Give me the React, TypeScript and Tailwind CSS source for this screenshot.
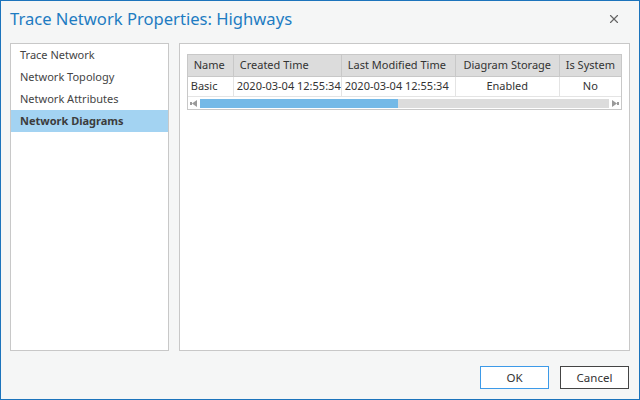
import { X } from "lucide-react";

const font = { fontFamily: '"Segoe UI", "Noto Sans", sans-serif' };

const navItems = ["Trace Network", "Network Topology", "Network Attributes", "Network Diagrams"];

const columns = [
  { label: "Name", w: "w-[46px]", center: false },
  { label: "Created Time", w: "w-[108px]", center: false },
  { label: "Last Modified Time", w: "w-[114px]", center: false },
  { label: "Diagram Storage", w: "w-[104px]", center: true },
  { label: "Is System", w: "flex-1", center: true },
];

const row = ["Basic", "2020-03-04 12:55:34", "2020-03-04 12:55:34", "Enabled", "No"];

export default function App() {
  return (
    <div
      className="w-[640px] h-[400px] bg-[#f5f6f6] border border-[#1c74bc] flex flex-col text-[#333] overflow-hidden"
      style={font}
    >
      {/* Title bar */}
      <div className="h-[42px] flex items-center pl-[9px] pr-[18px]">
        <h1 className="text-[16.6px] text-[#1e7cc2] leading-none -mt-[6px] whitespace-nowrap">
          Trace Network Properties: Highways
        </h1>
        <X className="ml-auto w-[14px] h-[14px] text-[#666] -mt-[6px]" strokeWidth={2} />
      </div>

      <div className="flex gap-[10px] px-[9px] h-[308px]">
        {/* Left nav */}
        <ul className="w-[160px] bg-white border border-[#c8c8c8] text-[11px]">
          {navItems.map((item, i) => (
            <li
              key={item}
              className={
                "h-[22px] flex items-center px-[9px] whitespace-nowrap " +
                (i === 3 ? "bg-[#a3d3f2] font-bold text-[#3c3c3c]" : "text-[#444]")
              }
            >
              {item}
            </li>
          ))}
        </ul>

        {/* Right panel */}
        <div className="flex-1 bg-white border border-[#c8c8c8] pt-[10px] px-[7px]">
          <div className="border border-[#c8c8c8] text-[11px]">
            <div className="flex h-[22px] bg-[#dcdcdc] border-b border-[#c8c8c8]">
              {columns.map((c, i) => (
                <div
                  key={c.label}
                  className={
                    c.w +
                    " flex items-center px-[6px] whitespace-nowrap overflow-hidden text-[#333] " +
                    (i < columns.length - 1 ? "border-r border-[#c8c8c8] " : "") +
                    (c.center ? "justify-center" : "")
                  }
                >
                  {c.label}
                </div>
              ))}
            </div>
            <div className="flex h-[20px] border-b border-[#e4e4e4]">
              {row.map((v, i) => (
                <div
                  key={i}
                  className={
                    columns[i].w +
                    " flex items-center px-[3px] whitespace-nowrap overflow-hidden text-[#333] " +
                    (i < row.length - 1 ? "border-r border-[#e4e4e4] " : "") +
                    (columns[i].center ? "justify-center" : "")
                  }
                >
                  {v}
                </div>
              ))}
            </div>
            {/* Horizontal scrollbar */}
            <div className="flex items-center h-[12px] px-[1px] gap-[2px]">
              <svg width="9" height="9" viewBox="0 0 9 9">
                <path d="M8 1 L3 4.5 L8 8 Z" fill="#9a9a9a" />
                <rect x="1" y="3" width="2" height="3" fill="#9a9a9a" />
              </svg>
              <div className="flex-1 h-[9px] bg-[#dcdcdc] flex">
                <div className="w-[198px] h-full bg-[#74b9e7]" />
              </div>
              <svg width="9" height="9" viewBox="0 0 9 9">
                <path d="M1 1 L6 4.5 L1 8 Z" fill="#9a9a9a" />
                <rect x="6" y="3" width="2" height="3" fill="#9a9a9a" />
              </svg>
            </div>
          </div>
        </div>
      </div>

      {/* Buttons */}
      <div className="flex justify-end gap-[11px] pr-[10px] pt-[15px]">
        <button className="w-[69px] h-[23px] bg-white border border-[#3d9ae8] text-[11.5px] text-[#333]">OK</button>
        <button className="w-[69px] h-[23px] bg-white border border-[#444] text-[11.5px] text-[#333]">Cancel</button>
      </div>
    </div>
  );
}
